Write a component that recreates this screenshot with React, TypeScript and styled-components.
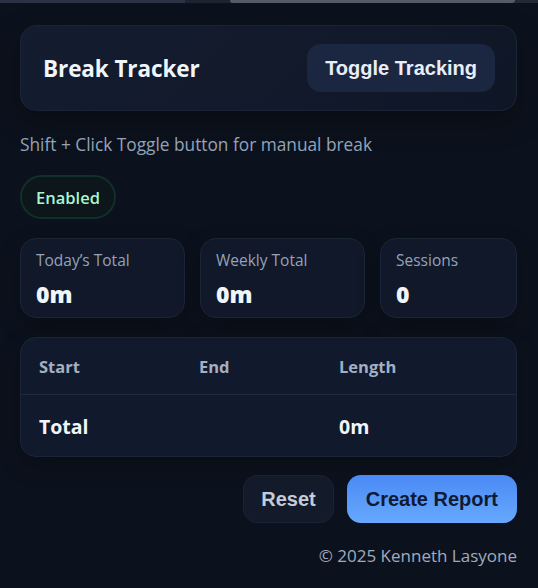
import React from "react";
import styled, { createGlobalStyle } from "styled-components";

const Global = createGlobalStyle`
  html, body {
    margin: 0;
    padding: 0;
    background: #0c121d;
  }
  body {
    font-family: "Open Sans", "Noto Sans", sans-serif;
    color: #e2e8f0;
  }
  * { box-sizing: border-box; }
`;

const TopStrip = styled.div`
  height: 3px;
  display: flex;
  background: #222937;
`;

const StripSeg = styled.div<{ $w: number; $c: string; $r?: boolean }>`
  width: ${(p) => p.$w}px;
  background: ${(p) => p.$c};
  border-radius: ${(p) => (p.$r ? "0 0 6px 6px" : "0")};
`;

const Page = styled.main`
  padding: 22px 21px 20px 20px;
  display: flex;
  flex-direction: column;
`;

const HeaderCard = styled.header`
  display: flex;
  align-items: center;
  justify-content: space-between;
  height: 86px;
  padding: 0 21px 0 22px;
  border: 1px solid #1a2436;
  border-radius: 16px;
  background: linear-gradient(135deg, #141d30 0%, #0f1626 100%);
  box-shadow: 0 10px 28px rgba(0, 0, 0, 0.35);
`;

const Title = styled.h1`
  margin: 0;
  font-size: 22.5px;
  font-weight: 700;
  color: #f1f5f9;
  letter-spacing: -0.1px;
`;

const BaseButton = styled.button`
  font-family: "Liberation Sans", Arial, sans-serif;
  font-weight: 700;
  font-size: 20px;
  height: 48px;
  padding: 0 18px;
  border-radius: 14px;
  cursor: pointer;
`;

const ToggleButton = styled(BaseButton)`
  border: none;
  background: #1b2641;
  color: #e8eef8;
`;

const Hint = styled.p`
  margin: 23px 0 0;
  font-size: 17.3px;
  line-height: 21px;
  color: #94a3b8;
`;

const Pill = styled.div`
  align-self: flex-start;
  margin-top: 20px;
  height: 44px;
  width: 96px;
  display: flex;
  align-items: center;
  justify-content: center;
  border: 2px solid #113029;
  border-radius: 22px;
  background: #0c161b;
  color: #a9f5d2;
  font-size: 16.5px;
  font-weight: 600;
`;

const StatsRow = styled.section`
  margin-top: 19px;
  display: grid;
  grid-template-columns: 165fr 165fr 137fr;
  gap: 15px;
`;

const StatCard = styled.div`
  height: 80px;
  padding: 11px 15px 0 15px;
  border: 1px solid #1b2538;
  border-radius: 16px;
  background: #101829;
  box-shadow: 0 8px 22px rgba(0, 0, 0, 0.3);
`;

const StatLabel = styled.div`
  font-size: 15.5px;
  line-height: 20px;
  color: #94a3b8;
`;

const StatValue = styled.div`
  margin-top: 10px;
  font-size: 23px;
  line-height: 28px;
  font-weight: 800;
  color: #f1f5f9;
`;

const TableCard = styled.section`
  margin-top: 19px;
  border: 1px solid #1b2538;
  border-radius: 16px;
  background: #111a2d;
  box-shadow: 0 8px 22px rgba(0, 0, 0, 0.3);
  overflow: hidden;
`;

const TableRow = styled.div<{ $head?: boolean }>`
  display: grid;
  grid-template-columns: 160px 140px 1fr;
  align-items: center;
  height: ${(p) => (p.$head ? "57px" : "61px")};
  padding-top: ${(p) => (p.$head ? "0" : "2px")};
  border-bottom: ${(p) => (p.$head ? "1px solid #1e2a42" : "none")};
`;

const Cell = styled.div<{ $head?: boolean }>`
  padding-left: 18px;
  font-weight: 700;
  font-size: ${(p) => (p.$head ? "16.5px" : "19.5px")};
  color: ${(p) => (p.$head ? "#a3afc4" : "#f1f5f9")};
`;

const Actions = styled.div`
  margin-top: 18px;
  display: flex;
  justify-content: flex-end;
  gap: 13px;
`;

const ResetButton = styled(BaseButton)`
  padding: 0 17px;
  border: 1px solid #1a2335;
  background: #131b2b;
  color: #c5ccd8;
`;

const ReportButton = styled(BaseButton)`
  padding: 0 19px;
  border: none;
  background: linear-gradient(180deg, #4a8af6 0%, #67a8fd 100%);
  color: #0f1a33;
`;

const Footer = styled.footer`
  margin-top: 22px;
  text-align: right;
  font-size: 17px;
  line-height: 21px;
  color: #a0abbd;
`;

const stats = [
  { label: "Today\u2019s Total", value: "0m" },
  { label: "Weekly Total", value: "0m" },
  { label: "Sessions", value: "0" },
];

export default function App() {
  return (
    <>
      <Global />
      <TopStrip>
        <StripSeg $w={185} $c="#2b3243" />
        <StripSeg $w={45} $c="#1d2330" />
        <StripSeg $w={285} $c="#555b67" $r />
      </TopStrip>
      <Page>
        <HeaderCard>
          <Title>Break Tracker</Title>
          <ToggleButton>Toggle Tracking</ToggleButton>
        </HeaderCard>
        <Hint>Shift + Click Toggle button for manual break</Hint>
        <Pill>Enabled</Pill>
        <StatsRow>
          {stats.map((s) => (
            <StatCard key={s.label}>
              <StatLabel>{s.label}</StatLabel>
              <StatValue>{s.value}</StatValue>
            </StatCard>
          ))}
        </StatsRow>
        <TableCard>
          <TableRow $head>
            <Cell $head>Start</Cell>
            <Cell $head>End</Cell>
            <Cell $head>Length</Cell>
          </TableRow>
          <TableRow>
            <Cell>Total</Cell>
            <Cell />
            <Cell>0m</Cell>
          </TableRow>
        </TableCard>
        <Actions>
          <ResetButton>Reset</ResetButton>
          <ReportButton>Create Report</ReportButton>
        </Actions>
        <Footer>© 2025 Kenneth Lasyone</Footer>
      </Page>
    </>
  );
}
